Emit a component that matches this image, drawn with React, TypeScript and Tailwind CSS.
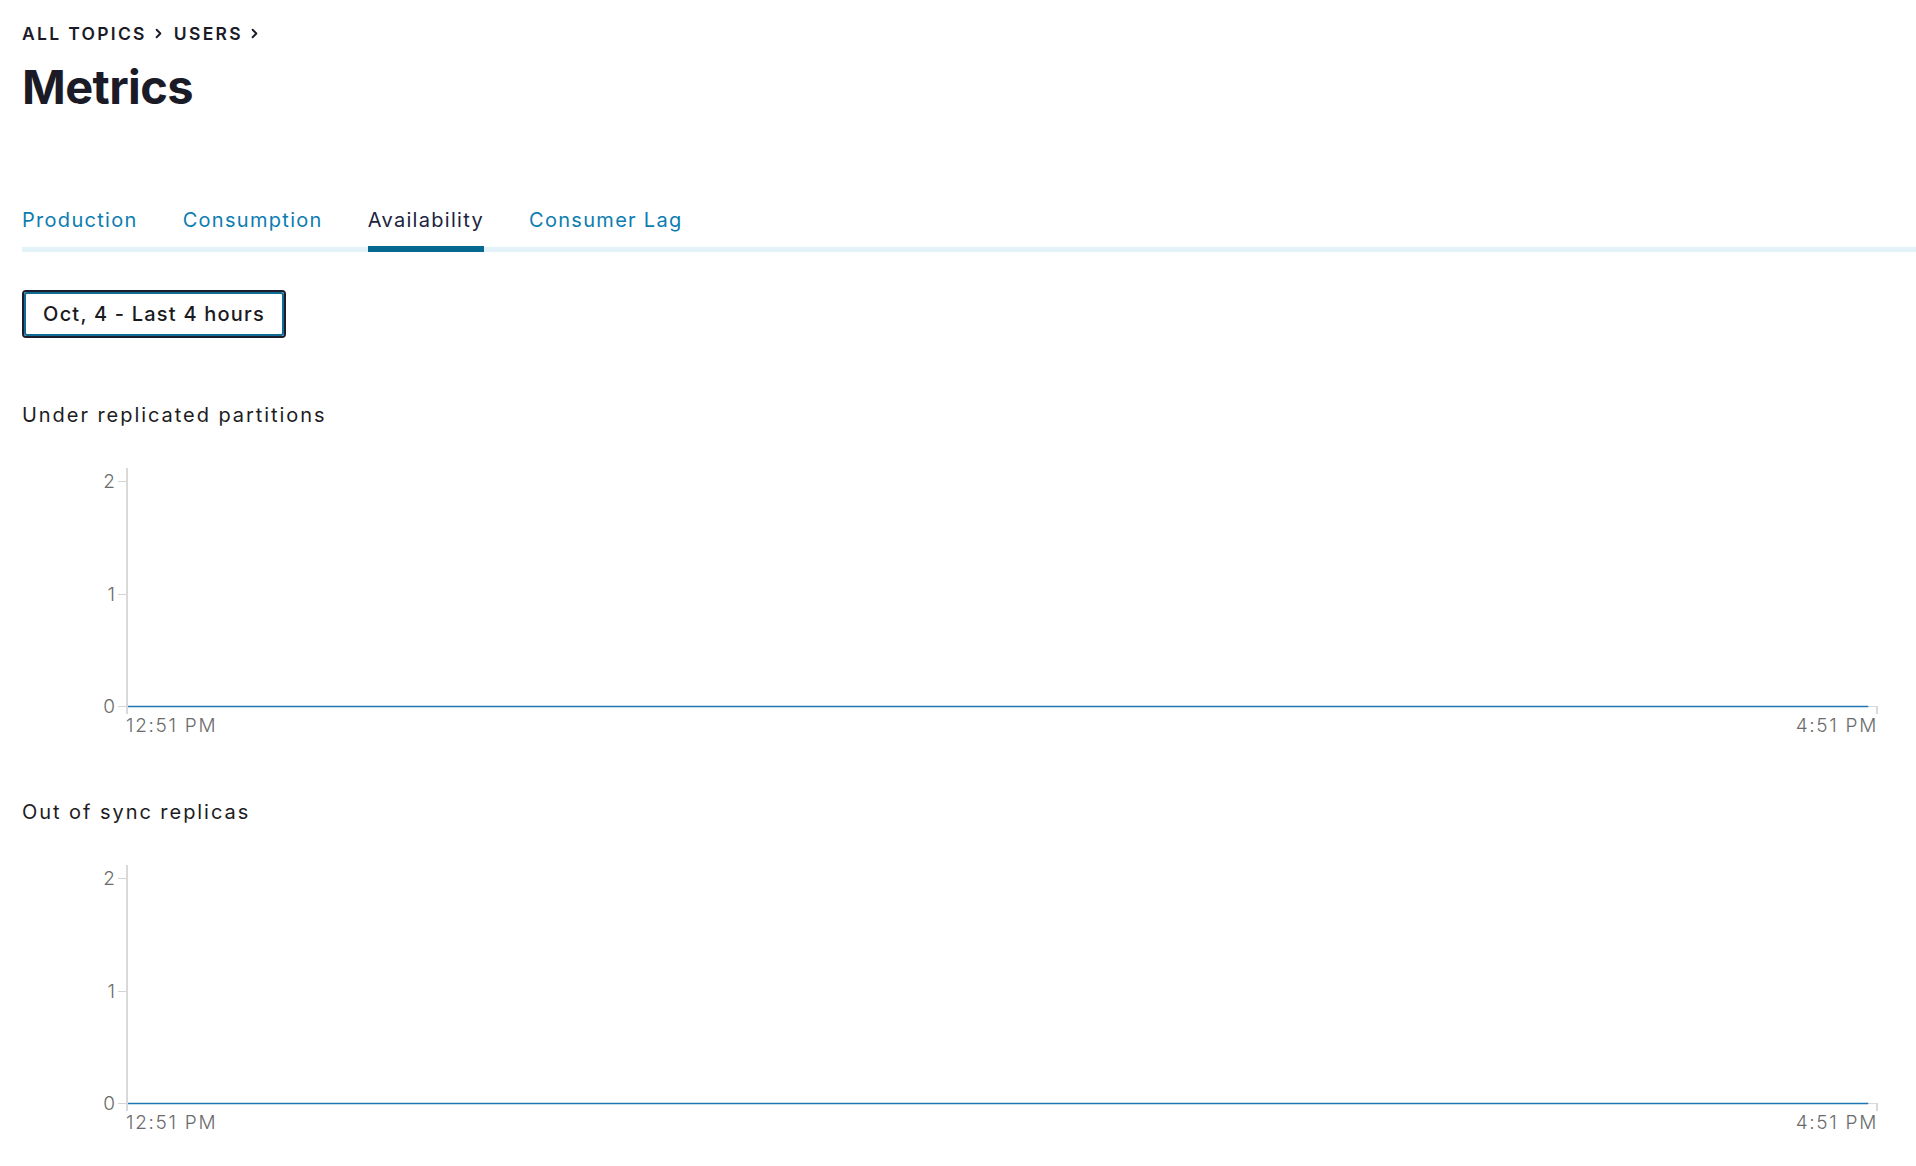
import { ChevronRight } from "lucide-react";

const tabs = ["Production", "Consumption", "Availability", "Consumer Lag"];

function Chart({ title }: { title: string }) {
  return (
    <section className="mr-[39px]">
      <h3 className="text-[20px] font-normal tracking-[1.95px] text-[#1c1c22] leading-none">
        {title}
      </h3>
      <div className="mt-[43px] flex h-[246px]">
        <svg width="104" height="246" className="shrink-0 overflow-visible">
          {[
            { v: "2", y: 13 },
            { v: "1", y: 126 },
            { v: "0", y: 238 },
          ].map((t) => (
            <g key={t.v}>
              <text
                x="93"
                y={t.y + 7}
                textAnchor="end"
                fontSize="19"
                fontWeight="300"
                fill="#6b6b6b"
              >
                {t.v}
              </text>
              <line x1="96" x2="104" y1={t.y + 0.5} y2={t.y + 0.5} stroke="#d4d4d4" strokeWidth="1" />
            </g>
          ))}
        </svg>
        <svg className="flex-1 h-[246px] overflow-visible">
          <line x1="1" x2="1" y1="0" y2="246" stroke="#d9d9d9" strokeWidth="2" />
          <line x1="0" x2="100%" y1="238.5" y2="238.5" stroke="#d9d9d9" strokeWidth="1" />
          <line x1="100%" x2="100%" y1="238" y2="246" stroke="#d9d9d9" strokeWidth="2" />
          <line x1="2" x2="99.5%" y1="238.5" y2="238.5" stroke="#1f77b4" strokeWidth="1.5" />
        </svg>
      </div>
      <div className="mt-[2px] flex justify-between pl-[104px] text-[19px] font-light tracking-[1.7px] text-[#6b6b6b] leading-none">
        <span>12:51 PM</span>
        <span className="-mr-[1px]">4:51 PM</span>
      </div>
    </section>
  );
}

export default function App() {
  return (
    <div className="min-h-screen bg-white pl-[22px] pt-[25px] font-['Inter',sans-serif] text-[#1a1b27]">
      <nav className="flex items-center text-[17.5px] font-semibold tracking-[2.3px] leading-none">
        <span>ALL TOPICS</span>
        <ChevronRight className="ml-[4px] mr-[8px] size-[15px]" strokeWidth={3} />
        <span>USERS</span>
        <ChevronRight className="ml-[4px] size-[15px]" strokeWidth={3} />
      </nav>
      <h1 className="mt-[20px] text-[47px] font-bold leading-none tracking-[-0.6px]">
        Metrics
      </h1>

      <div className="mt-[96px] flex gap-[45px] border-b-[5px] border-[#e3f1f9]">
        {tabs.map((t) => (
          <button
            key={t}
            className={
              t === "Availability"
                ? "relative pb-[13px] text-[20px] leading-[28px] tracking-[1.3px] text-[#1c2340]"
                : "relative pb-[13px] text-[20px] leading-[28px] tracking-[1.3px] text-[#0c7db1]"
            }
          >
            {t}
            {t === "Availability" && (
              <span className="absolute left-0 right-0 -bottom-[5px] h-[6px] bg-[#05688f]" />
            )}
          </button>
        ))}
      </div>

      <button className="mt-[38px] h-[48px] w-[264px] rounded-[4px] border-2 border-[#1b1d2a] bg-white p-0">
        <span className="flex h-full w-full items-center justify-center rounded-[3px] border-2 border-[#116c95] text-[20px] font-medium tracking-[1.2px] text-[#1a1a1f]">
          Oct, 4 - Last 4 hours
        </span>
      </button>

      <div className="mt-[67px]">
        <Chart title="Under replicated partitions" />
      </div>
      <div className="mt-[67px]">
        <Chart title="Out of sync replicas" />
      </div>
    </div>
  );
}
